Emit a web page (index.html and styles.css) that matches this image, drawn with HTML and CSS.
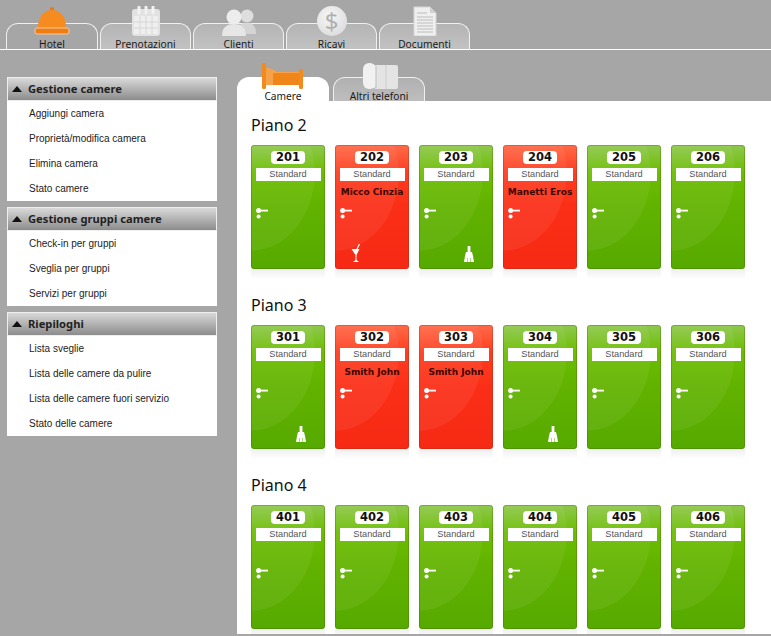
FILE: index.html
```html
<!DOCTYPE html>
<html lang="it">
<head>
  <meta charset="UTF-8">
  <meta name="viewport" content="width=device-width, initial-scale=1.0">
  <title>Hotel</title>
  <link rel="stylesheet" href="styles.css">
</head>
<body>
  <!-- icone riutilizzate nelle camere -->
  <svg class="defs" width="0" height="0">
    <symbol id="handle" viewBox="0 0 12 11">
      <circle cx="2.6" cy="2.6" r="2.5" fill="#fff"/>
      <rect x="3" y="1.7" width="9" height="1.8" fill="#fff"/>
      <circle cx="2.6" cy="8.6" r="2" fill="#fff"/>
    </symbol>
    <symbol id="broom" viewBox="0 0 12 16">
      <rect x="4.6" y="0" width="2.8" height="7" fill="#fff"/>
      <path d="M3 6h6l1 4 1 6H1l1-6z" fill="#fff"/>
      <path d="M4.5 12v4M7.5 12v4" stroke="#8bc34a" stroke-width=".7"/>
    </symbol>
    <symbol id="drink" viewBox="0 0 12 18">
      <path d="M1.5 5h8L6.5 11v5l2.5 2h-6l2.5-2v-5z" fill="#fff"/>
      <path d="M6.5 6l3-6" stroke="#fff" stroke-width="1.2"/>
    </symbol>
  </svg>

  <nav class="tabs">
    <div class="tab active">
      <svg class="tab-icon" width="36" height="30" viewBox="0 0 36 30">
        <rect x="16" y="1" width="4" height="4" rx="2" fill="#e8791a"/>
        <path d="M4 21C4 11 10 4 18 4s14 7 14 17z" fill="#f68b1f"/>
        <rect x="1" y="22" width="34" height="6" rx="2" fill="#ef7d14" stroke="#f6c99a"/>
      </svg>
      <span>Hotel</span>
    </div>
    <div class="tab">
      <svg class="tab-icon" width="36" height="30" viewBox="0 0 36 30">
        <rect x="4" y="3" width="28" height="27" rx="3" fill="#e2e2e2"/>
        <path d="M11 1v6M18 1v6M25 1v6" stroke="#f2f2f2" stroke-width="3" stroke-linecap="round"/>
        <path d="M6 10h24v18H6z" fill="#efefef"/>
        <path d="M12 10v18M18 10v18M24 10v18M6 16h24M6 22h24" stroke="#d6d6d6"/>
      </svg>
      <span>Prenotazioni</span>
    </div>
    <div class="tab">
      <svg class="tab-icon" width="36" height="30" viewBox="0 0 36 30">
        <circle cx="26" cy="10" r="6.5" fill="#dedede"/>
        <path d="M15 28c0-8 5-11 11-11s9 3 9 11z" fill="#d4d4d4"/>
        <circle cx="13" cy="11" r="7.5" fill="#ededed"/>
        <path d="M1 30c0-9 5-12 12-12s12 3 12 12z" fill="#e6e6e6"/>
      </svg>
      <span>Clienti</span>
    </div>
    <div class="tab">
      <div class="coin"><span>$</span></div>
      <span>Ricavi</span>
    </div>
    <div class="tab">
      <svg class="tab-icon" width="36" height="30" viewBox="0 0 36 30">
        <path d="M7 1h16l6 6v23H7z" fill="#efefef" stroke="#d6d6d6"/>
        <path d="M23 1v6h6z" fill="#cfcfcf"/>
        <path d="M10 7h10M10 11h16M10 14h16M10 17h16M10 20h16M10 23h16M10 26h16" stroke="#bdbdbd"/>
      </svg>
      <span>Documenti</span>
    </div>
  </nav>

  <div class="main">
    <aside class="sidebar">
      <section class="box">
        <h3 class="box-title"><i class="arrow"></i>Gestione camere</h3>
        <ul class="box-list">
          <li>Aggiungi camera</li>
          <li>Proprietà/modifica camera</li>
          <li>Elimina camera</li>
          <li>Stato camere</li>
        </ul>
      </section>
      <section class="box">
        <h3 class="box-title"><i class="arrow"></i>Gestione gruppi camere</h3>
        <ul class="box-list">
          <li>Check-in per gruppi</li>
          <li>Sveglia per gruppi</li>
          <li>Servizi per gruppi</li>
        </ul>
      </section>
      <section class="box">
        <h3 class="box-title"><i class="arrow"></i>Riepiloghi</h3>
        <ul class="box-list">
          <li>Lista sveglie</li>
          <li>Lista delle camere da pulire</li>
          <li>Lista delle camere fuori servizio</li>
          <li>Stato delle camere</li>
        </ul>
      </section>
    </aside>

    <div class="content">
      <div class="subtabs">
        <div class="subtab active">
          <svg class="subtab-icon" width="44" height="26" viewBox="0 0 44 26">
            <rect x="1" y="0" width="4" height="26" rx="1.5" fill="#f28a1e"/>
            <rect x="38" y="6" width="4" height="20" rx="1.5" fill="#f28a1e"/>
            <path d="M5 5c4 0 8 1 10 4h23v13H5z" fill="#f6a24a"/>
            <rect x="12" y="10" width="26" height="12" fill="#f0851a"/>
          </svg>
          <span>Camere</span>
        </div>
        <div class="subtab">
          <svg class="subtab-icon" width="44" height="26" viewBox="0 0 44 26">
            <rect x="17" y="2" width="24" height="24" rx="2" fill="#e4e4e4"/>
            <rect x="6" y="0" width="13" height="26" rx="6" fill="#f1f1f1"/>
            <path d="M19 3v22" stroke="#bdbdbd"/>
            <path d="M29 2v24" stroke="#cfcfcf"/>
          </svg>
          <span>Altri telefoni</span>
        </div>
      </div>

      <div class="panel">
        <section class="floor">
          <h2>Piano 2</h2>
          <div class="rooms">
            <div class="room"><div class="door"><b class="num">201</b><div class="kind">Standard</div><div class="guest"></div><svg class="handle"><use href="#handle"/></svg></div><div class="shine"></div></div>
            <div class="room"><div class="door busy"><b class="num">202</b><div class="kind">Standard</div><div class="guest">Micco Cinzia</div><svg class="handle"><use href="#handle"/></svg><svg class="service drink"><use href="#drink"/></svg></div><div class="shine"></div></div>
            <div class="room"><div class="door"><b class="num">203</b><div class="kind">Standard</div><div class="guest"></div><svg class="handle"><use href="#handle"/></svg><svg class="service broom"><use href="#broom"/></svg></div><div class="shine"></div></div>
            <div class="room"><div class="door busy"><b class="num">204</b><div class="kind">Standard</div><div class="guest">Manetti Eros</div><svg class="handle"><use href="#handle"/></svg></div><div class="shine"></div></div>
            <div class="room"><div class="door"><b class="num">205</b><div class="kind">Standard</div><div class="guest"></div><svg class="handle"><use href="#handle"/></svg></div><div class="shine"></div></div>
            <div class="room"><div class="door"><b class="num">206</b><div class="kind">Standard</div><div class="guest"></div><svg class="handle"><use href="#handle"/></svg></div><div class="shine"></div></div>
          </div>
        </section>

        <section class="floor">
          <h2>Piano 3</h2>
          <div class="rooms">
            <div class="room"><div class="door"><b class="num">301</b><div class="kind">Standard</div><div class="guest"></div><svg class="handle"><use href="#handle"/></svg><svg class="service broom"><use href="#broom"/></svg></div><div class="shine"></div></div>
            <div class="room"><div class="door busy"><b class="num">302</b><div class="kind">Standard</div><div class="guest">Smith John</div><svg class="handle"><use href="#handle"/></svg></div><div class="shine"></div></div>
            <div class="room"><div class="door busy"><b class="num">303</b><div class="kind">Standard</div><div class="guest">Smith John</div><svg class="handle"><use href="#handle"/></svg></div><div class="shine"></div></div>
            <div class="room"><div class="door"><b class="num">304</b><div class="kind">Standard</div><div class="guest"></div><svg class="handle"><use href="#handle"/></svg><svg class="service broom"><use href="#broom"/></svg></div><div class="shine"></div></div>
            <div class="room"><div class="door"><b class="num">305</b><div class="kind">Standard</div><div class="guest"></div><svg class="handle"><use href="#handle"/></svg></div><div class="shine"></div></div>
            <div class="room"><div class="door"><b class="num">306</b><div class="kind">Standard</div><div class="guest"></div><svg class="handle"><use href="#handle"/></svg></div><div class="shine"></div></div>
          </div>
        </section>

        <section class="floor">
          <h2>Piano 4</h2>
          <div class="rooms">
            <div class="room"><div class="door"><b class="num">401</b><div class="kind">Standard</div><div class="guest"></div><svg class="handle"><use href="#handle"/></svg></div><div class="shine"></div></div>
            <div class="room"><div class="door"><b class="num">402</b><div class="kind">Standard</div><div class="guest"></div><svg class="handle"><use href="#handle"/></svg></div><div class="shine"></div></div>
            <div class="room"><div class="door"><b class="num">403</b><div class="kind">Standard</div><div class="guest"></div><svg class="handle"><use href="#handle"/></svg></div><div class="shine"></div></div>
            <div class="room"><div class="door"><b class="num">404</b><div class="kind">Standard</div><div class="guest"></div><svg class="handle"><use href="#handle"/></svg></div><div class="shine"></div></div>
            <div class="room"><div class="door"><b class="num">405</b><div class="kind">Standard</div><div class="guest"></div><svg class="handle"><use href="#handle"/></svg></div><div class="shine"></div></div>
            <div class="room"><div class="door"><b class="num">406</b><div class="kind">Standard</div><div class="guest"></div><svg class="handle"><use href="#handle"/></svg></div><div class="shine"></div></div>
          </div>
        </section>
      </div>
    </div>
  </div>
</body>
</html>
```

FILE: styles.css
```css
body {
  font-family: "Noto Sans", Tahoma, sans-serif;
  margin: 0;
  padding: 0;
  height: 636px;
  overflow: hidden;
  background-color: #a6a6a6;
  color: #1a1a1a;
}

.defs {
  display: block;
}

/* tab principali */
.tabs {
  display: flex;
  gap: 2px;
  height: 49px;
  padding-left: 6px;
  border-bottom: 1px solid #fff;
  align-items: flex-end;
}

.tab {
  width: 89px;
  height: 25px;
  border: 1px solid #f0f0f0;
  border-bottom: none;
  border-radius: 12px 12px 0 0;
  background: linear-gradient(#b4b4b4, #c2c2c2);
  display: flex;
  flex-direction: column;
  align-items: center;
  justify-content: flex-end;
  font-size: 10.2px;
  line-height: 10px;
}

.tab.active {
  width: 90px;
  background: #a6a6a6;
}

.tab-icon {
  margin-bottom: 3px;
  flex: none;
}

.coin {
  width: 30px;
  height: 30px;
  margin-bottom: 3px;
  flex: none;
  border-radius: 50%;
  background: radial-gradient(circle at 40% 35%, #f6f6f6, #d6d6d6);
  color: #b0b0b0;
  font-size: 24px;
  line-height: 30px;
  text-align: center;
}

/* corpo della pagina */
.main {
  display: flex;
  gap: 20px;
  padding-left: 7px;
}

.sidebar {
  width: 210px;
  padding-top: 27px;
  display: flex;
  flex-direction: column;
  gap: 6px;
}

.box-title {
  margin: 0;
  height: 20px;
  padding-bottom: 2px;
  border: 1px solid #eee;
  background: linear-gradient(#d9d9d9, #8c8c8c);
  display: flex;
  align-items: center;
  font-size: 11.2px;
  font-weight: bold;
  color: #222;
}

.arrow {
  width: 0;
  height: 0;
  margin: 2px 6px 0 4px;
  border-left: 5px solid transparent;
  border-right: 5px solid transparent;
  border-bottom: 6px solid #111;
}

.box-list {
  margin: 0;
  padding: 0;
  list-style: none;
  background-color: #fff;
}

.box-list li {
  height: 25px;
  line-height: 26px;
  padding-left: 22px;
  font-family: "Liberation Sans", Arial, sans-serif;
  font-size: 10px;
  color: #222;
}

.content {
  flex: 1;
  padding-top: 27px;
}

.subtabs {
  display: flex;
  gap: 4px;
  height: 24px;
  align-items: flex-end;
}

.subtab {
  width: 90px;
  height: 23px;
  border: 1px solid #f0f0f0;
  border-bottom: none;
  border-radius: 12px 12px 0 0;
  background: linear-gradient(#b0b0b0, #bebebe);
  display: flex;
  flex-direction: column;
  align-items: center;
  justify-content: flex-end;
  font-size: 10.2px;
  line-height: 9px;
}

.subtab.active {
  background: #fff;
  border-color: #fff;
}

.subtab-icon {
  margin-bottom: 3px;
  flex: none;
}

.panel {
  height: 519px;
  padding: 14px 0 0 14px;
  overflow: hidden;
  background-color: #fff;
}

.floor {
  margin-bottom: 16px;
}

.floor h2 {
  margin: 0 0 10px;
  font-size: 16px;
  font-weight: normal;
  line-height: 20px;
  color: #111;
}

.rooms {
  display: flex;
  gap: 10px;
}

.room {
  width: 74px;
}

.door {
  height: 124px;
  box-sizing: border-box;
  padding-top: 6px;
  border-radius: 3px;
  box-shadow: inset 0 0 0 1px rgba(60, 110, 0, 0.35);
  display: flex;
  flex-direction: column;
  align-items: center;
  background:
    radial-gradient(ellipse 64px 78px at 0 28px, rgba(255, 255, 255, 0.06) 99%, transparent 100%),
    linear-gradient(#8fc84e 0, #6bbd00 28px, #62b300 60px, #56a900 100%);
}

.door.busy {
  box-shadow: inset 0 0 0 1px rgba(150, 40, 20, 0.3);
  background:
    radial-gradient(ellipse 64px 78px at 0 28px, rgba(255, 255, 255, 0.06) 99%, transparent 100%),
    linear-gradient(#ff6a48 0, #ff3c1f 28px, #fb2f17 60px, #f62a14 100%);
}

.num {
  width: 34px;
  height: 13px;
  border-radius: 4px;
  background-color: #fff;
  font-family: "DejaVu Sans", Verdana, sans-serif;
  font-size: 11.5px;
  line-height: 13px;
  text-align: center;
  color: #111;
}

.kind {
  width: 65px;
  height: 13px;
  margin-top: 4px;
  background-color: #fff;
  font-family: "Liberation Sans", Arial, sans-serif;
  font-size: 9.2px;
  line-height: 13px;
  text-align: center;
  color: #555;
}

.guest {
  height: 14px;
  margin-top: 4px;
  font-family: "DejaVu Sans", Verdana, sans-serif;
  font-size: 9px;
  font-weight: bold;
  line-height: 14px;
  white-space: nowrap;
  color: #3c0500;
}

.handle {
  width: 12px;
  height: 11px;
  margin-top: 9px;
  align-self: flex-start;
  margin-left: 5px;
}

.service {
  margin-top: auto;
  align-self: flex-start;
}

.broom {
  width: 12px;
  height: 16px;
  margin-bottom: 7px;
  margin-left: 44px;
}

.drink {
  width: 12px;
  height: 18px;
  margin-bottom: 7px;
  margin-left: 15px;
}

.shine {
  height: 10px;
  background: linear-gradient(#efefef, #fff);
}
```
